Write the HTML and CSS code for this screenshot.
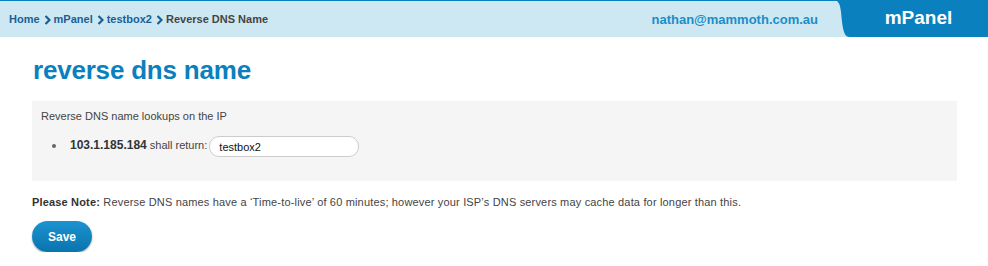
FILE: index.html
```html
<!DOCTYPE html>
<html>
<head>
  <title>mPanel - Reverse DNS Name</title>
  <link rel="stylesheet" href="styles.css">
</head>
<body>
  <div class="header">
    <div class="breadcrumb">
      <a href="#">Home</a>
      <svg class="crumb-sep" width="7" height="10" viewBox="0 0 7 10"><path d="M1.5 1 L5.5 5 L1.5 9" fill="none" stroke="#1a5f93" stroke-width="2.2"/></svg>
      <a href="#">mPanel</a>
      <svg class="crumb-sep" width="7" height="10" viewBox="0 0 7 10"><path d="M1.5 1 L5.5 5 L1.5 9" fill="none" stroke="#1a5f93" stroke-width="2.2"/></svg>
      <a href="#">testbox2</a>
      <svg class="crumb-sep" width="7" height="10" viewBox="0 0 7 10"><path d="M1.5 1 L5.5 5 L1.5 9" fill="none" stroke="#1a5f93" stroke-width="2.2"/></svg>
      <span class="current">Reverse DNS Name</span>
    </div>
    <div class="user">nathan@mammoth.com.au</div>
    <div class="tab">
      <svg class="tab-curve" width="16" height="37" viewBox="0 0 16 37" preserveAspectRatio="none"><path d="M0 0 C5 0 7 3 8 12 C9.5 29 11 37 16 37 L16 0 Z" fill="#0a80be"/></svg>
      <div class="tab-body">mPanel</div>
    </div>
  </div>

  <div class="content">
    <h1>reverse dns name</h1>

    <div class="panel">
      <p>Reverse DNS name lookups on the IP</p>
      <ul>
        <li><b>103.1.185.184</b> shall return: <input type="text" value="testbox2"></li>
      </ul>
    </div>

    <p class="note"><b>Please Note:</b> Reverse DNS names have a ‘Time-to-live’ of 60 minutes; however your ISP’s DNS servers may cache data for longer than this.</p>

    <button>Save</button>
  </div>
</body>
</html>
```

FILE: styles.css
```css
:root {
  --blue: #0a80be;
  --blue-dark: #1a5f93;
  --header-bg: #cde8f3;
  --text: #444;
  --panel-bg: #f5f5f5;
}

body {
  margin: 0;
  font-family: 'Liberation Sans', Arial, sans-serif;
  color: var(--text);
  background: #fff;
}

.header {
  display: flex;
  align-items: stretch;
  height: 36px;
  background: var(--header-bg);
  border-top: 1px solid var(--blue);
}

.breadcrumb {
  flex: 1;
  display: flex;
  align-items: center;
  padding-left: 9px;
  font-size: 11px;
  font-weight: bold;
}

.breadcrumb a {
  color: var(--blue-dark);
  text-decoration: none;
}

.crumb-sep {
  margin: 1px 3px 0 4px;
}

.breadcrumb .current {
  color: #444;
}

.user {
  display: flex;
  align-items: center;
  margin-right: 15px;
  font-size: 13px;
  font-weight: bold;
  color: #1b8dc8;
}

.tab {
  display: flex;
  width: 155px;
  margin-top: -1px;
}

.tab-curve {
  display: block;
  height: 37px;
}

.tab-body {
  flex: 1;
  display: flex;
  align-items: center;
  justify-content: center;
  background: var(--blue);
  color: #fff;
  font-size: 19px;
  font-weight: bold;
  padding-bottom: 1px;
}

.content {
  padding: 0 31px 0 32px;
}

h1 {
  margin: 18px 0 16px 1px;
  font-size: 26px;
  line-height: 30px;
  color: var(--blue);
  letter-spacing: -0.2px;
}

.panel {
  background: var(--panel-bg);
  padding: 9px 9px 24px;
  font-size: 11px;
}

.panel p {
  margin: 0 0 14px;
}

.panel ul {
  margin: 0;
  padding-left: 29px;
  list-style: none;
}

.panel li {
  position: relative;
}

.panel li::before {
  content: "";
  position: absolute;
  left: -18px;
  top: 8px;
  width: 4px;
  height: 4px;
  border-radius: 50%;
  background: #666;
}

.panel b {
  color: #333;
  font-size: 12px;
}

.panel input {
  width: 150px;
  height: 21px;
  box-sizing: border-box;
  margin-left: -1px;
  padding: 0 9px;
  border: 1px solid #ccc;
  border-radius: 10px;
  font-family: 'Liberation Sans', Arial, sans-serif;
  font-size: 11px;
  color: #111;
  background: #fff;
  vertical-align: middle;
}

.note {
  margin: 15px 0 13px;
  font-size: 11px;
  letter-spacing: 0.17px;
}

.note b {
  color: #333;
}

button {
  width: 60px;
  height: 31px;
  border: none;
  border-radius: 16px;
  background: linear-gradient(#1b93d0, #0a74ae);
  box-shadow: 0 1px 2px rgba(0, 0, 0, 0.35);
  color: #fff;
  font-family: 'Liberation Sans', Arial, sans-serif;
  font-size: 12px;
  font-weight: bold;
  cursor: pointer;
}
```
